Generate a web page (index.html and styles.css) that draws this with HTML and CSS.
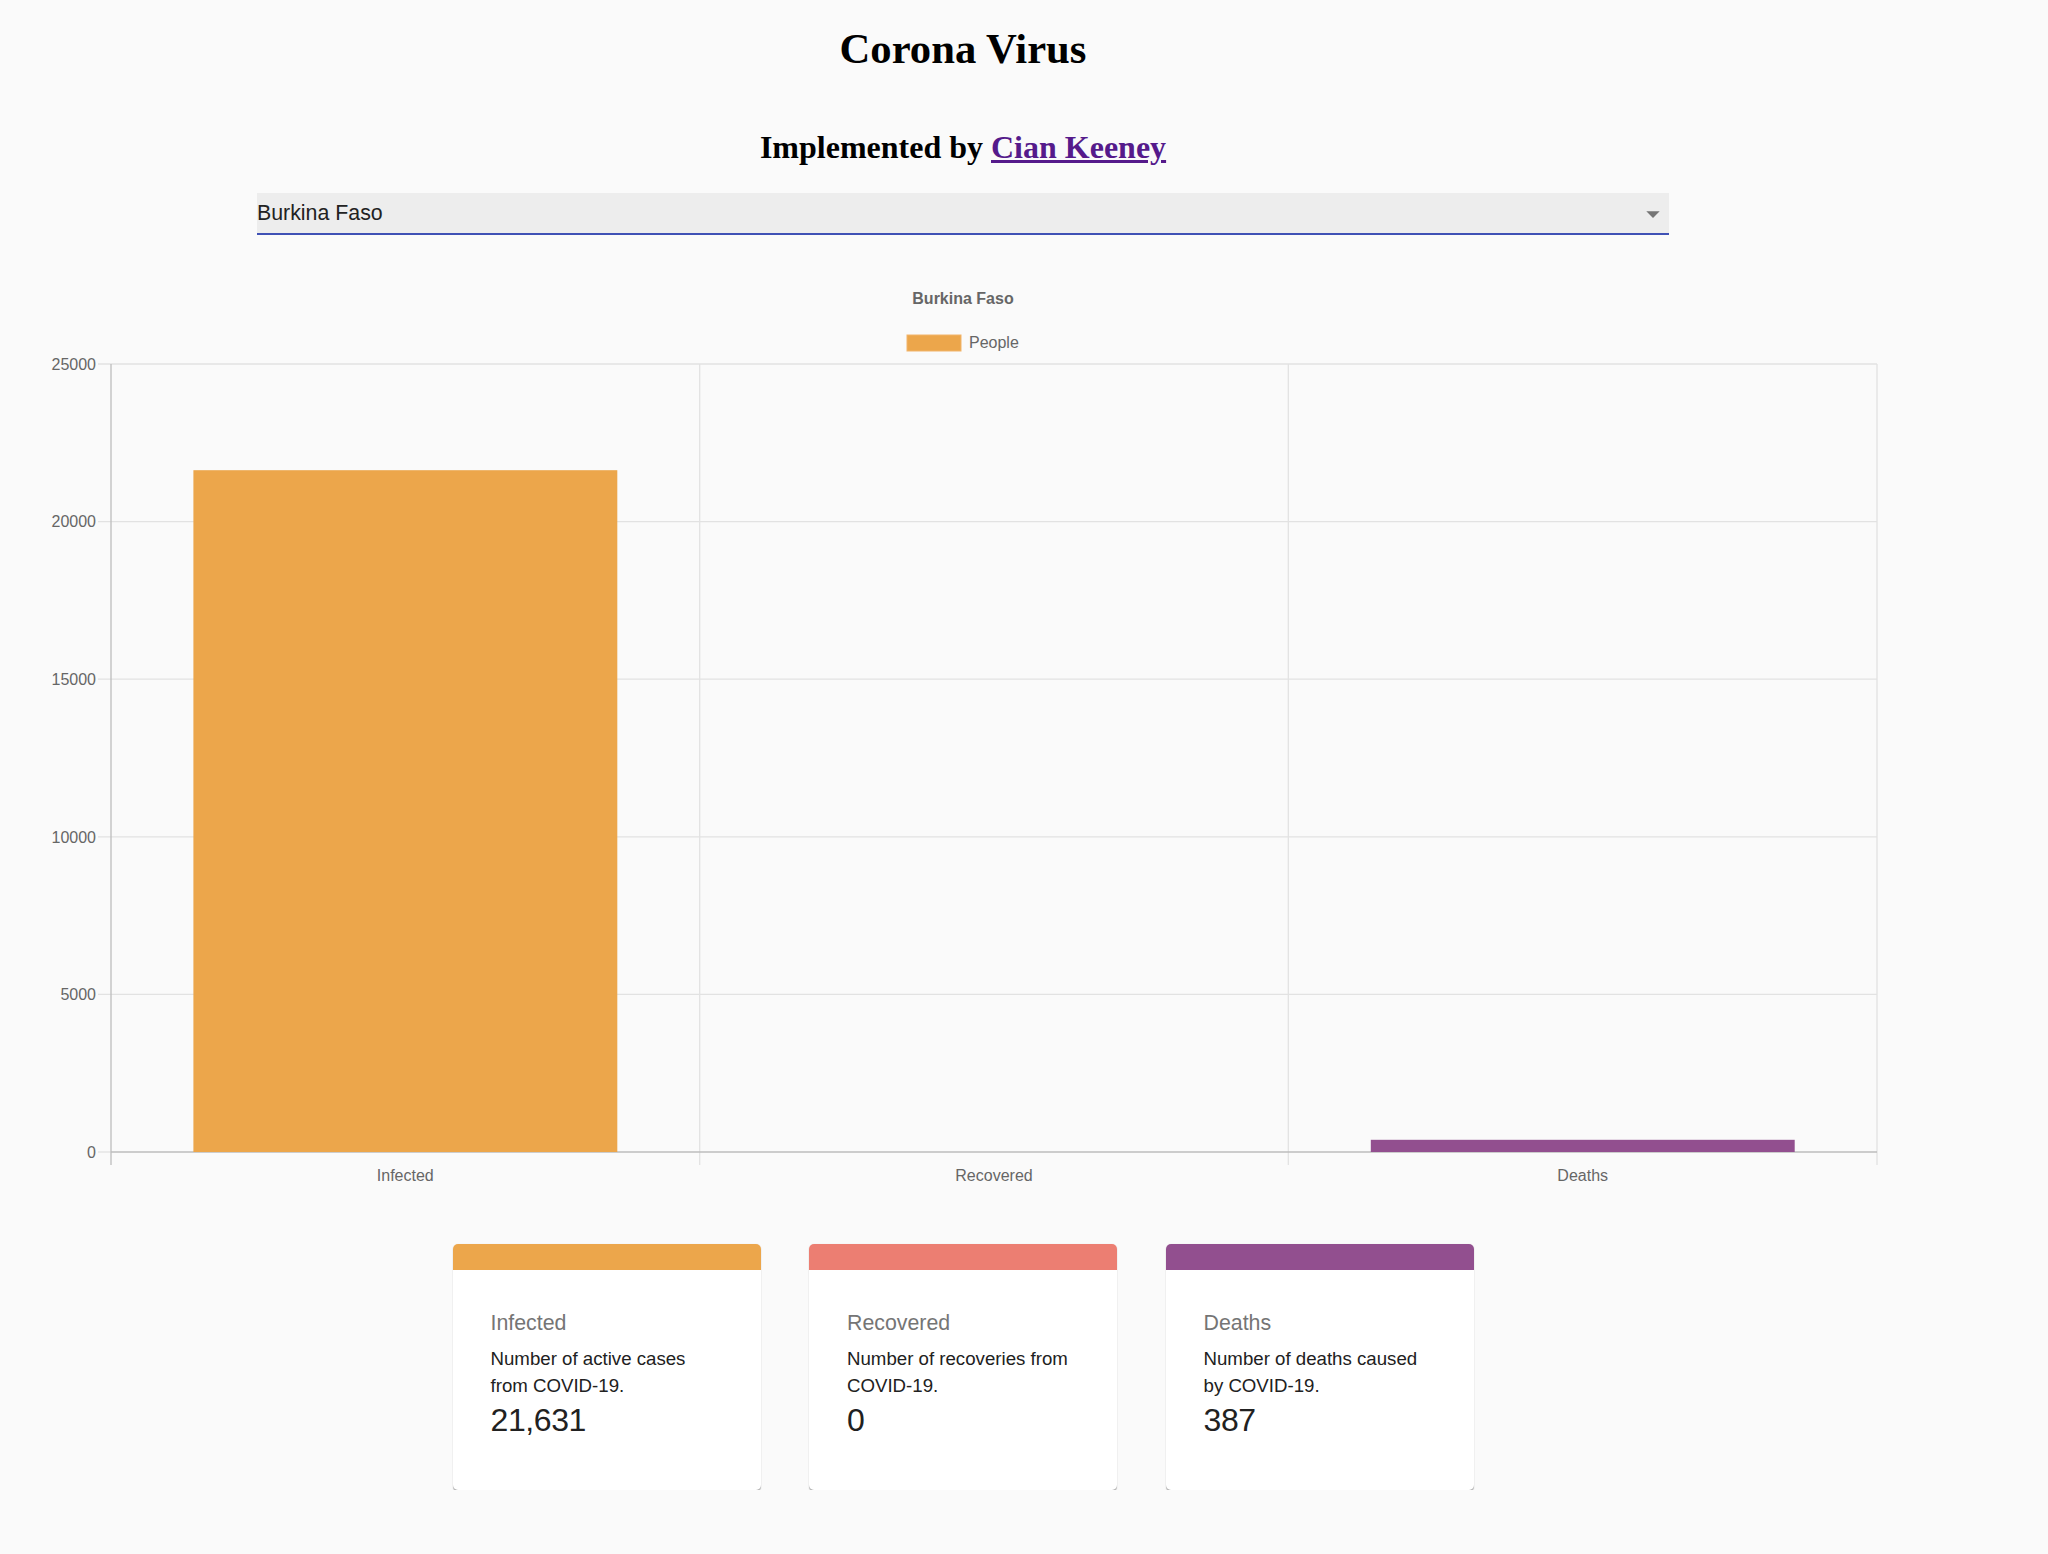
FILE: index.html
```html
<!DOCTYPE html>
<html lang="en">
<head>
<meta charset="utf-8">
<title>Corona Virus</title>
<link rel="stylesheet" href="styles.css">
</head>
<body>
<div class="page">
  <h1 class="title">Corona Virus</h1>
  <h2 class="subtitle">Implemented by <a href="#" class="author">Cian Keeney</a></h2>

  <div class="select">
    <span class="select-value">Burkina Faso</span>
    <svg class="select-arrow" viewBox="0 0 24 24" width="32" height="32"><path d="M7 10l5 5 5-5z" fill="#757575"/></svg>
  </div>

  <svg class="chart" width="1926" height="965" viewBox="0 0 1926 965">
    <text x="963" y="69" class="chart-title" text-anchor="middle">Burkina Faso</text>
    <rect x="907" y="100" width="54" height="16" fill="#eca64b" stroke="#f1b46a" stroke-width="1"/>
    <text x="969" y="113" class="tick">People</text>

    <!-- horizontal gridlines -->
    <g stroke="#e2e2e2" stroke-width="1.3">
      <line x1="98" y1="129" x2="1877" y2="129"/>
      <line x1="98" y1="286.6" x2="1877" y2="286.6"/>
      <line x1="98" y1="444.2" x2="1877" y2="444.2"/>
      <line x1="98" y1="601.8" x2="1877" y2="601.8"/>
      <line x1="98" y1="759.4" x2="1877" y2="759.4"/>
      <line x1="98" y1="917" x2="111" y2="917"/>
      <!-- vertical gridlines -->
      <line x1="699.7" y1="129" x2="699.7" y2="930"/>
      <line x1="1288.3" y1="129" x2="1288.3" y2="930"/>
      <line x1="1877" y1="129" x2="1877" y2="930"/>
    </g>
    <g stroke="#bdbdbd" stroke-width="1.3">
      <line x1="111" y1="129" x2="111" y2="930"/>
      <line x1="111" y1="917" x2="1877" y2="917"/>
    </g>

    <!-- bars -->
    <rect x="193.4" y="235.2" width="423.9" height="681.8" fill="#eca64b"/>
    <rect x="1370.8" y="904.8" width="423.9" height="12.2" fill="#924f8f"/>

    <!-- y labels -->
    <g class="tick" text-anchor="end">
      <text x="96" y="134.7">25000</text>
      <text x="96" y="292.3">20000</text>
      <text x="96" y="449.9">15000</text>
      <text x="96" y="607.5">10000</text>
      <text x="96" y="765.1">5000</text>
      <text x="96" y="922.7">0</text>
    </g>
    <!-- x labels -->
    <g class="tick" text-anchor="middle">
      <text x="405.3" y="946">Infected</text>
      <text x="994" y="946">Recovered</text>
      <text x="1582.7" y="946">Deaths</text>
    </g>
  </svg>

  <div class="cards">
    <div class="card">
      <div class="card-band band-infected"></div>
      <div class="card-body">
        <div class="card-title">Infected</div>
        <div class="card-desc">Number of active cases from COVID-19.</div>
        <div class="card-num">21,631</div>
      </div>
    </div>
    <div class="card">
      <div class="card-band band-recovered"></div>
      <div class="card-body">
        <div class="card-title">Recovered</div>
        <div class="card-desc">Number of recoveries from COVID-19.</div>
        <div class="card-num">0</div>
      </div>
    </div>
    <div class="card">
      <div class="card-band band-deaths"></div>
      <div class="card-body">
        <div class="card-title">Deaths</div>
        <div class="card-desc">Number of deaths caused by COVID-19.</div>
        <div class="card-num">387</div>
      </div>
    </div>
  </div>
</div>
</body>
</html>
```

FILE: styles.css
```css
html, body {
  margin: 0;
  padding: 0;
  background: #fafafa;
}

.page {
  width: 1926px;
  padding-top: 24px;
  display: flex;
  flex-direction: column;
  align-items: center;
}

.title {
  margin: 0;
  font-family: "Liberation Serif", "Times New Roman", serif;
  font-weight: bold;
  font-size: 42.67px;
  line-height: 49px;
  color: #000;
}

.subtitle {
  margin: 56px 0 0;
  font-family: "Liberation Serif", "Times New Roman", serif;
  font-weight: bold;
  font-size: 32px;
  line-height: 37px;
  color: #000;
}

.author {
  color: #551a8b;
  text-decoration: underline;
}

.select {
  position: relative;
  margin-top: 27px;
  width: 1412px;
  height: 40px;
  box-sizing: content-box;
  background: #ededed;
  border-bottom: 2px solid #3f51b5;
  font-family: "Liberation Sans", Arial, sans-serif;
  font-size: 21.33px;
  line-height: 24px;
  color: #222;
  text-align: left;
}

.select-value {
  display: block;
  padding-top: 7.6px;
}

.select-arrow {
  position: absolute;
  right: 0;
  top: 4.7px;
}

.chart {
  display: block;
  font-family: "Liberation Sans", Arial, sans-serif;
}

.chart-title {
  font-size: 16px;
  font-weight: bold;
  fill: #666;
}

.tick {
  font-size: 16px;
  fill: #666;
}

.cards {
  margin-top: 44px;
  display: flex;
  gap: 48.5px;
  justify-content: center;
}

.card {
  width: 308px;
  height: 246px;
  background: #fff;
  border-radius: 5px;
  overflow: hidden;
  box-shadow: 0 1.5px 1px 0 rgba(0,0,0,0.28), 0 0 2px 0 rgba(0,0,0,0.06);
  font-family: "Liberation Sans", Arial, sans-serif;
}

.card-band {
  height: 26px;
}

.band-infected { background: #eca64b; }
.band-recovered { background: #ec7e72; }
.band-deaths { background: #924f8f; }

.card-body {
  padding: 36.6px 38px 0;
}

.card-title {
  font-size: 21.33px;
  line-height: 32px;
  color: #757575;
  margin-bottom: 7.47px;
}

.card-desc {
  font-size: 18.67px;
  line-height: 26.67px;
  color: #212121;
}

.card-num {
  font-size: 32px;
  line-height: 42.7px;
  color: #212121;
  letter-spacing: -0.4px;
}
```
